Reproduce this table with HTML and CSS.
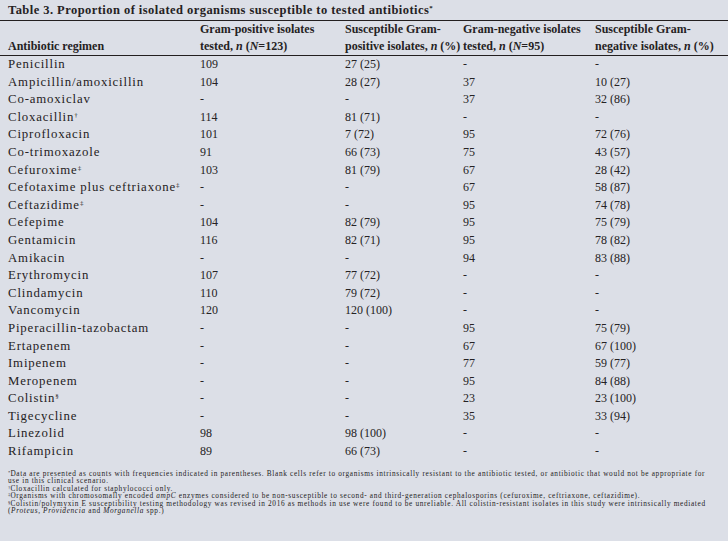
FILE: index.html
```html
<!DOCTYPE html>
<html lang="en">
<head>
<meta charset="utf-8">
<title>Table 3</title>
<link rel="stylesheet" href="styles.css">
</head>
<body>
<div class="page">
  <h1 class="title">Table 3. Proportion of isolated organisms susceptible to tested antibiotics<sup>*</sup></h1>
  <table class="data">
    <colgroup>
      <col class="c1"><col class="c2"><col class="c3"><col class="c4"><col class="c5">
    </colgroup>
    <thead>
      <tr>
        <th>Antibiotic regimen</th>
        <th>Gram-positive isolates<br>tested, <i>n</i> (<i>N</i>=123)</th>
        <th>Susceptible Gram-<br>positive isolates, <i>n</i> (%)</th>
        <th>Gram-negative isolates<br>tested, <i>n</i> (<i>N</i>=95)</th>
        <th>Susceptible Gram-<br>negative isolates, <i>n</i> (%)</th>
      </tr>
    </thead>
    <tbody>
      <tr><td>Penicillin</td><td>109</td><td>27 (25)</td><td>-</td><td>-</td></tr>
      <tr><td>Ampicillin/amoxicillin</td><td>104</td><td>28 (27)</td><td>37</td><td>10 (27)</td></tr>
      <tr><td>Co-amoxiclav</td><td>-</td><td>-</td><td>37</td><td>32 (86)</td></tr>
      <tr><td>Cloxacillin<sup>†</sup></td><td>114</td><td>81 (71)</td><td>-</td><td>-</td></tr>
      <tr><td>Ciprofloxacin</td><td>101</td><td>7 (72)</td><td>95</td><td>72 (76)</td></tr>
      <tr><td>Co-trimoxazole</td><td>91</td><td>66 (73)</td><td>75</td><td>43 (57)</td></tr>
      <tr><td>Cefuroxime<sup>‡</sup></td><td>103</td><td>81 (79)</td><td>67</td><td>28 (42)</td></tr>
      <tr><td>Cefotaxime plus ceftriaxone<sup>‡</sup></td><td>-</td><td>-</td><td>67</td><td>58 (87)</td></tr>
      <tr><td>Ceftazidime<sup>‡</sup></td><td>-</td><td>-</td><td>95</td><td>74 (78)</td></tr>
      <tr><td>Cefepime</td><td>104</td><td>82 (79)</td><td>95</td><td>75 (79)</td></tr>
      <tr><td>Gentamicin</td><td>116</td><td>82 (71)</td><td>95</td><td>78 (82)</td></tr>
      <tr><td>Amikacin</td><td>-</td><td>-</td><td>94</td><td>83 (88)</td></tr>
      <tr><td>Erythromycin</td><td>107</td><td>77 (72)</td><td>-</td><td>-</td></tr>
      <tr><td>Clindamycin</td><td>110</td><td>79 (72)</td><td>-</td><td>-</td></tr>
      <tr><td>Vancomycin</td><td>120</td><td>120 (100)</td><td>-</td><td>-</td></tr>
      <tr><td>Piperacillin-tazobactam</td><td>-</td><td>-</td><td>95</td><td>75 (79)</td></tr>
      <tr><td>Ertapenem</td><td>-</td><td>-</td><td>67</td><td>67 (100)</td></tr>
      <tr><td>Imipenem</td><td>-</td><td>-</td><td>77</td><td>59 (77)</td></tr>
      <tr><td>Meropenem</td><td>-</td><td>-</td><td>95</td><td>84 (88)</td></tr>
      <tr><td>Colistin<sup>§</sup></td><td>-</td><td>-</td><td>23</td><td>23 (100)</td></tr>
      <tr><td>Tigecycline</td><td>-</td><td>-</td><td>35</td><td>33 (94)</td></tr>
      <tr><td>Linezolid</td><td>98</td><td>98 (100)</td><td>-</td><td>-</td></tr>
      <tr><td>Rifampicin</td><td>89</td><td>66 (73)</td><td>-</td><td>-</td></tr>
    </tbody>
  </table>
  <div class="notes">
    <p><sup>*</sup>Data are presented as counts with frequencies indicated in parentheses. Blank cells refer to organisms intrinsically resistant to the antibiotic tested, or antibiotic that would not be appropriate for<br>use in this clinical scenario.</p>
    <p><sup>†</sup>Cloxacillin calculated for staphylococci only.</p>
    <p><sup>‡</sup>Organisms with chromosomally encoded <i>ampC</i> enzymes considered to be non-susceptible to second- and third-generation cephalosporins (cefuroxime, ceftriaxone, ceftazidime).</p>
    <p><sup>§</sup>Colistin/polymyxin E susceptibility testing methodology was revised in 2016 as methods in use were found to be unreliable. All colistin-resistant isolates in this study were intrinsically mediated<br>(<i>Proteus, Providencia</i> and <i>Morganella</i> spp.)</p>
  </div>
</div>
</body>
</html>
```
FILE: styles.css
```css
html, body {
  margin: 0;
  padding: 0;
  background: #dcdfe7;
}
body {
  font-family: "Liberation Serif", "Times New Roman", serif;
  color: #252223;
  width: 728px;
  height: 541px;
  overflow: hidden;
}
.page {
  display: flex;
  flex-direction: column;
}
.title {
  margin: 0;
  padding: 3px 8px 2px;
  font-size: 12.5px;
  letter-spacing: 0.45px;
  line-height: 15px;
  font-weight: bold;
  border-bottom: 1.5px solid #231f20;
}
.title sup, .data sup {
  font-size: 0.55em;
  vertical-align: 0.6em;
  line-height: 0;
  letter-spacing: 0;
}
.data {
  width: 728px;
  border-collapse: collapse;
  table-layout: fixed;
  font-size: 12px;
}
.c1 { width: 200px; }
.c2 { width: 145px; }
.c3 { width: 118px; }
.c4 { width: 132px; }
.c5 { width: 133px; }
.data th {
  text-align: left;
  font-weight: bold;
  vertical-align: bottom;
  line-height: 17px;
  padding: 0;
  white-space: nowrap;
  border-bottom: 1px solid #231f20;
}
.data td {
  padding: 0;
  line-height: 17.6px;
  height: 17.6px;
  white-space: nowrap;
}
.data th:first-child {
  padding-left: 8px;
}
.data td:first-child {
  padding-left: 8px;
  font-size: 12.8px;
  letter-spacing: 0.85px;
}
.notes {
  margin-top: 9px;
  padding: 0 8px;
  font-size: 7.3px;
  letter-spacing: 0.66px;
  line-height: 7.5px;
  white-space: nowrap;
}
.notes p {
  margin: 0;
}
.notes sup {
  font-size: 0.65em;
  vertical-align: 0.45em;
  line-height: 0;
  letter-spacing: 0;
}
```
